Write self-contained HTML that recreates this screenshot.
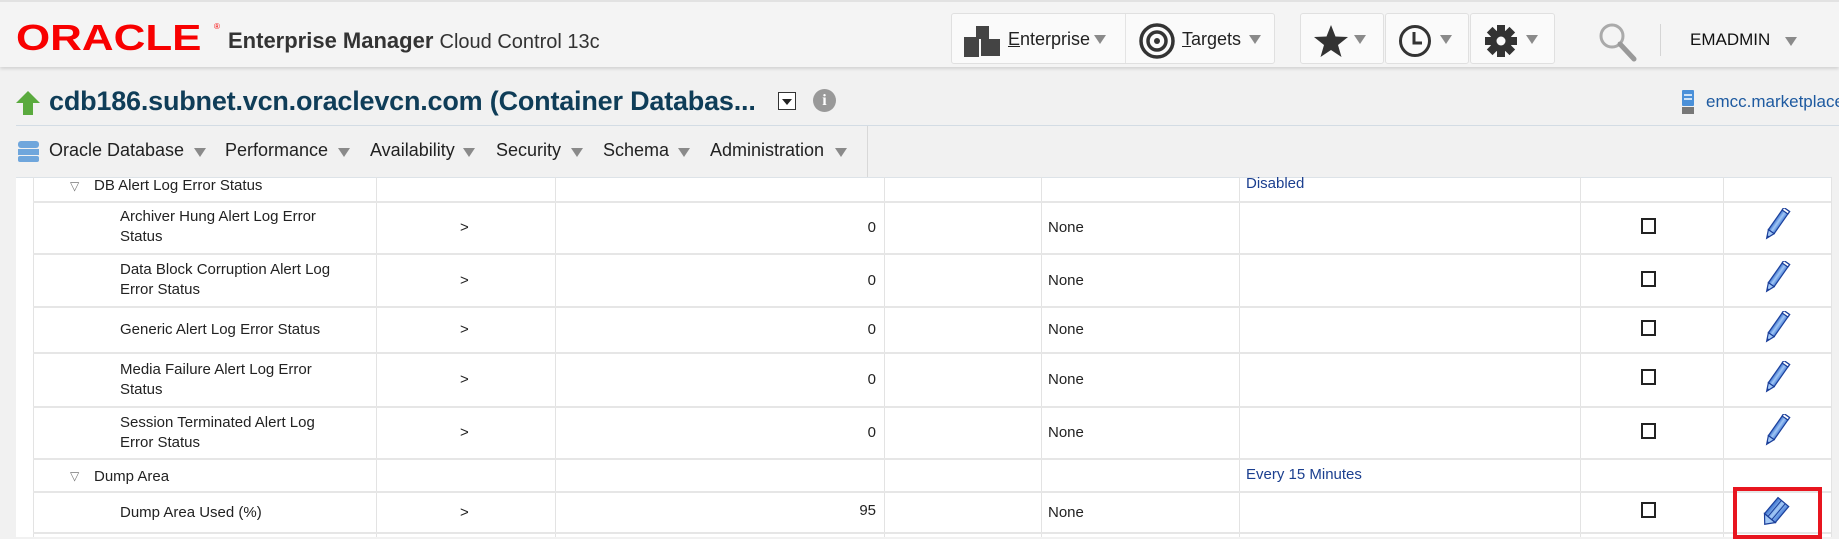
<!DOCTYPE html>
<html><head><meta charset="utf-8"><style>
*{margin:0;padding:0;box-sizing:border-box}
body{width:1839px;height:537px;overflow:hidden;background:#f1f1f1;font-family:"Liberation Sans",sans-serif;position:relative}
.a{position:absolute}
.hdr{left:0;top:0;width:1839px;height:67px;background:#f4f4f4;border-top:2px solid #e2e2e2;box-shadow:0 2px 3px rgba(0,0,0,.12)}
.btn{background:#fafafa;border:1px solid #e0e0e0;border-radius:3px}
.tri{width:0;height:0;border-left:6px solid transparent;border-right:6px solid transparent;border-top:9px solid #8a8a8a}
.menu{font-size:18px;color:#222;top:140px}
.t{font-size:15px;color:#222;line-height:20px}
.vl{width:1px;background:#e3e3e3}
.hl{height:2px;background:#e6e6e6;left:33px;width:1798px}
.cb{width:15px;height:16px;border:2px solid #222;background:#fff}
.blue{color:#1b3f8f}
</style></head><body>
<div class="a hdr"></div>
<div class="a" style="left:16px;top:19px;font-size:36px;font-weight:bold;color:#f80000;transform:scaleX(1.22);transform-origin:left;line-height:38px">ORACLE</div>
<div class="a" style="left:214px;top:22px;font-size:8px;color:#f80000">®</div>
<div class="a" style="left:228px;top:28px;font-size:22px;color:#333;line-height:26px"><b>Enterprise Manager</b> <span style="font-size:20px">Cloud Control 13c</span></div>

<div class="a btn" style="left:951px;top:13px;width:324px;height:51px"></div>
<div class="a" style="left:1125px;top:14px;width:1px;height:49px;background:#e4e4e4"></div>
<svg class="a" style="left:964px;top:26px" width="38" height="32"><rect x="12" y="0" width="13" height="13" fill="#444"/><rect x="0" y="11" width="15" height="20" fill="#444"/><rect x="17" y="13" width="19" height="17" fill="#444"/></svg>
<div class="a" style="left:1008px;top:29px;font-size:18px;color:#222"><u>E</u>nterprise</div>
<div class="a tri" style="left:1094px;top:35px"></div>
<svg class="a" style="left:1139px;top:23px" width="36" height="36"><circle cx="18" cy="18" r="16" fill="none" stroke="#333" stroke-width="3.5"/><circle cx="18" cy="18" r="9" fill="none" stroke="#333" stroke-width="3.5"/><circle cx="18" cy="18" r="3" fill="#333"/></svg>
<div class="a" style="left:1182px;top:29px;font-size:18px;color:#222"><u>T</u>argets</div>
<div class="a tri" style="left:1249px;top:35px"></div>

<div class="a btn" style="left:1300px;top:13px;width:84px;height:51px"></div>
<div class="a btn" style="left:1385px;top:13px;width:84px;height:51px"></div>
<div class="a btn" style="left:1470px;top:13px;width:85px;height:51px"></div>
<svg class="a" style="left:1313px;top:24px" width="36" height="34"><polygon points="18,1 22.5,12.5 35,13 25,21 28.5,33 18,26 7.5,33 11,21 1,13 13.5,12.5" fill="#333"/></svg>
<div class="a tri" style="left:1354px;top:35px"></div>
<svg class="a" style="left:1398px;top:24px" width="34" height="34"><circle cx="17" cy="17" r="14.5" fill="none" stroke="#333" stroke-width="3"/><path d="M16 8v11h8" fill="none" stroke="#333" stroke-width="3"/></svg>
<div class="a tri" style="left:1440px;top:35px"></div>
<svg class="a" style="left:1484px;top:24px" width="34" height="34"><g fill="#333"><circle cx="17" cy="17" r="11"/><rect x="13" y="1" width="8" height="32"/><rect x="1" y="13" width="32" height="8"/><rect x="13" y="1" width="8" height="32" transform="rotate(45 17 17)"/><rect x="13" y="1" width="8" height="32" transform="rotate(-45 17 17)"/></g><circle cx="17" cy="17" r="4.5" fill="#fafafa"/></svg>
<div class="a tri" style="left:1526px;top:35px"></div>
<svg class="a" style="left:1598px;top:22px" width="40" height="40"><circle cx="14" cy="14" r="11" fill="none" stroke="#aaa" stroke-width="3"/><path d="M22 22l14 15" stroke="#999" stroke-width="5" stroke-linecap="round"/></svg>
<div class="a" style="left:1660px;top:24px;width:1px;height:32px;background:#d5d5d5"></div>
<div class="a" style="left:1690px;top:30px;font-size:17px;color:#111">EMADMIN</div>
<div class="a tri" style="left:1785px;top:37px"></div>

<svg class="a" style="left:16px;top:90px" width="26" height="26"><polygon points="12,1 24,13 17,13 17,25 7,25 7,13 0,13" fill="#5aaa3e"/></svg>
<div class="a" style="left:49px;top:86px;font-size:27px;font-weight:bold;color:#0f3d58;letter-spacing:-.2px">cdb186.subnet.vcn.oraclevcn.com (Container Databas...</div>
<div class="a" style="left:778px;top:92px;width:18px;height:18px;border:1px solid #333;background:#fff"></div>
<div class="a" style="left:782px;top:99px;border-left:5px solid transparent;border-right:5px solid transparent;border-top:6px solid #222"></div>
<div class="a" style="left:813px;top:89px;width:23px;height:23px;border-radius:50%;background:#999;color:#fff;font-weight:bold;font-size:16px;text-align:center;line-height:23px;font-family:'Liberation Serif',serif">i</div>
<svg class="a" style="left:1681px;top:90px" width="14" height="24"><rect x="1" y="0" width="12" height="16" rx="1" fill="#4a90d9"/><rect x="3" y="4" width="8" height="2" fill="#cfe3f7"/><rect x="3" y="8" width="8" height="2" fill="#cfe3f7"/><rect x="1" y="17" width="12" height="7" fill="#777"/></svg>
<div class="a" style="left:1706px;top:92px;font-size:17px;color:#1e5aa0;white-space:nowrap">emcc.marketplace</div>
<div class="a" style="left:16px;top:125px;width:1823px;height:1px;background:#d3dce4"></div>

<svg class="a" style="left:17px;top:141px" width="24" height="22"><rect x="1" y="0" width="21" height="7" rx="3" fill="#6fa6dc"/><rect x="1" y="8" width="21" height="6" fill="#6fa6dc"/><rect x="1" y="15" width="21" height="6" rx="2" fill="#6fa6dc"/></svg>
<div class="a menu" style="left:49px">Oracle Database</div><div class="a tri" style="left:194px;top:148px"></div>
<div class="a menu" style="left:225px">Performance</div><div class="a tri" style="left:338px;top:148px"></div>
<div class="a menu" style="left:370px">Availability</div><div class="a tri" style="left:463px;top:148px"></div>
<div class="a menu" style="left:496px">Security</div><div class="a tri" style="left:571px;top:148px"></div>
<div class="a menu" style="left:603px">Schema</div><div class="a tri" style="left:678px;top:148px"></div>
<div class="a menu" style="left:710px">Administration</div><div class="a tri" style="left:835px;top:148px"></div>
<div class="a" style="left:867px;top:126px;width:1px;height:51px;background:#d8d8d8"></div>

<div class="a" style="left:16px;top:177px;width:1815px;height:360px;background:#fff;border-top:1px solid #dde3e8"></div>
<div class="a vl" style="left:33px;top:177px;height:360px"></div>
<div class="a vl" style="left:376px;top:177px;height:360px"></div>
<div class="a vl" style="left:555px;top:177px;height:360px"></div>
<div class="a vl" style="left:884px;top:177px;height:360px"></div>
<div class="a vl" style="left:1041px;top:177px;height:360px"></div>
<div class="a vl" style="left:1239px;top:177px;height:360px"></div>
<div class="a vl" style="left:1580px;top:177px;height:360px"></div>
<div class="a vl" style="left:1723px;top:177px;height:360px"></div>
<div class="a vl" style="left:1831px;top:177px;height:360px"></div>
<div class="a hl" style="top:201px"></div>
<div class="a hl" style="top:253px"></div>
<div class="a hl" style="top:306px"></div>
<div class="a hl" style="top:352px"></div>
<div class="a hl" style="top:406px"></div>
<div class="a hl" style="top:458px"></div>
<div class="a hl" style="top:491px"></div>
<div class="a hl" style="top:532px"></div>

<div class="a t" style="left:70px;top:176px;color:#777;font-size:12px">&#9661;</div>
<div class="a t" style="left:94px;top:176px">DB Alert Log Error Status</div>
<div class="a t blue" style="left:1246px;top:174px">Disabled</div>

<div class="a t" style="left:120px;top:207px">Archiver Hung Alert Log Error<br>Status</div>
<div class="a t" style="left:120px;top:260px">Data Block Corruption Alert Log<br>Error Status</div>
<div class="a t" style="left:120px;top:320px">Generic Alert Log Error Status</div>
<div class="a t" style="left:120px;top:360px">Media Failure Alert Log Error<br>Status</div>
<div class="a t" style="left:120px;top:413px">Session Terminated Alert Log<br>Error Status</div>
<div class="a t" style="left:70px;top:466px;color:#777;font-size:12px">&#9661;</div>
<div class="a t" style="left:94px;top:467px">Dump Area</div>
<div class="a t blue" style="left:1246px;top:465px">Every 15 Minutes</div>
<div class="a t" style="left:120px;top:503px">Dump Area Used (%)</div>

<div class="a t" style="left:460px;top:218px">&gt;</div>
<div class="a t" style="left:460px;top:271px">&gt;</div>
<div class="a t" style="left:460px;top:320px">&gt;</div>
<div class="a t" style="left:460px;top:370px">&gt;</div>
<div class="a t" style="left:460px;top:423px">&gt;</div>
<div class="a t" style="left:460px;top:503px">&gt;</div>

<div class="a t" style="left:800px;width:76px;text-align:right;top:218px">0</div>
<div class="a t" style="left:800px;width:76px;text-align:right;top:271px">0</div>
<div class="a t" style="left:800px;width:76px;text-align:right;top:320px">0</div>
<div class="a t" style="left:800px;width:76px;text-align:right;top:370px">0</div>
<div class="a t" style="left:800px;width:76px;text-align:right;top:423px">0</div>
<div class="a t" style="left:800px;width:76px;text-align:right;top:501px">95</div>

<div class="a t" style="left:1048px;top:218px">None</div>
<div class="a t" style="left:1048px;top:271px">None</div>
<div class="a t" style="left:1048px;top:320px">None</div>
<div class="a t" style="left:1048px;top:370px">None</div>
<div class="a t" style="left:1048px;top:423px">None</div>
<div class="a t" style="left:1048px;top:503px">None</div>

<div class="a cb" style="left:1641px;top:218px"></div>
<div class="a cb" style="left:1641px;top:271px"></div>
<div class="a cb" style="left:1641px;top:320px"></div>
<div class="a cb" style="left:1641px;top:369px"></div>
<div class="a cb" style="left:1641px;top:423px"></div>
<div class="a cb" style="left:1641px;top:502px"></div>

<svg width="0" height="0" style="position:absolute"><defs>
<linearGradient id="pg" x1="0" y1="0" x2="1" y2="0"><stop offset="0" stop-color="#3a72d0"/><stop offset=".5" stop-color="#a3c8f5"/><stop offset="1" stop-color="#4a80d8"/></linearGradient>
<symbol id="pen" viewBox="0 0 34 32"><g transform="rotate(35 17 16)"><rect x="14" y="-2" width="7" height="27" fill="url(#pg)" stroke="#1b3f9a" stroke-width="1.2"/><polygon points="14,25 21,25 17.5,33" fill="#a3c8f5" stroke="#1b3f9a" stroke-width="1.2"/><polygon points="16,30 19,30 17.5,33" fill="#1b3f9a"/><rect x="14" y="-2" width="7" height="3" fill="#fff" stroke="#1b3f9a" stroke-width="1.2"/></g></symbol>
</defs></svg>
<svg class="a" style="left:1759px;top:208px" width="34" height="32"><use href="#pen"/></svg>
<svg class="a" style="left:1759px;top:261px" width="34" height="32"><use href="#pen"/></svg>
<svg class="a" style="left:1759px;top:311px" width="34" height="32"><use href="#pen"/></svg>
<svg class="a" style="left:1759px;top:361px" width="34" height="32"><use href="#pen"/></svg>
<svg class="a" style="left:1759px;top:414px" width="34" height="32"><use href="#pen"/></svg>
<svg class="a" style="left:1757px;top:496px" width="36" height="32"><g transform="rotate(40 18 16)"><rect x="11" y="3" width="14" height="21" fill="url(#pg)" stroke="#1b3f9a" stroke-width="1.2"/><line x1="15.5" y1="3" x2="15.5" y2="24" stroke="#1b3f9a"/><line x1="20.5" y1="3" x2="20.5" y2="24" stroke="#1b3f9a"/><polygon points="11,24 25,24 18,32" fill="#a3c8f5" stroke="#1b3f9a" stroke-width="1.2"/></g></svg>
<div class="a" style="left:1733px;top:487px;width:89px;height:52px;border:4px solid #e8151f"></div>
</body></html>
